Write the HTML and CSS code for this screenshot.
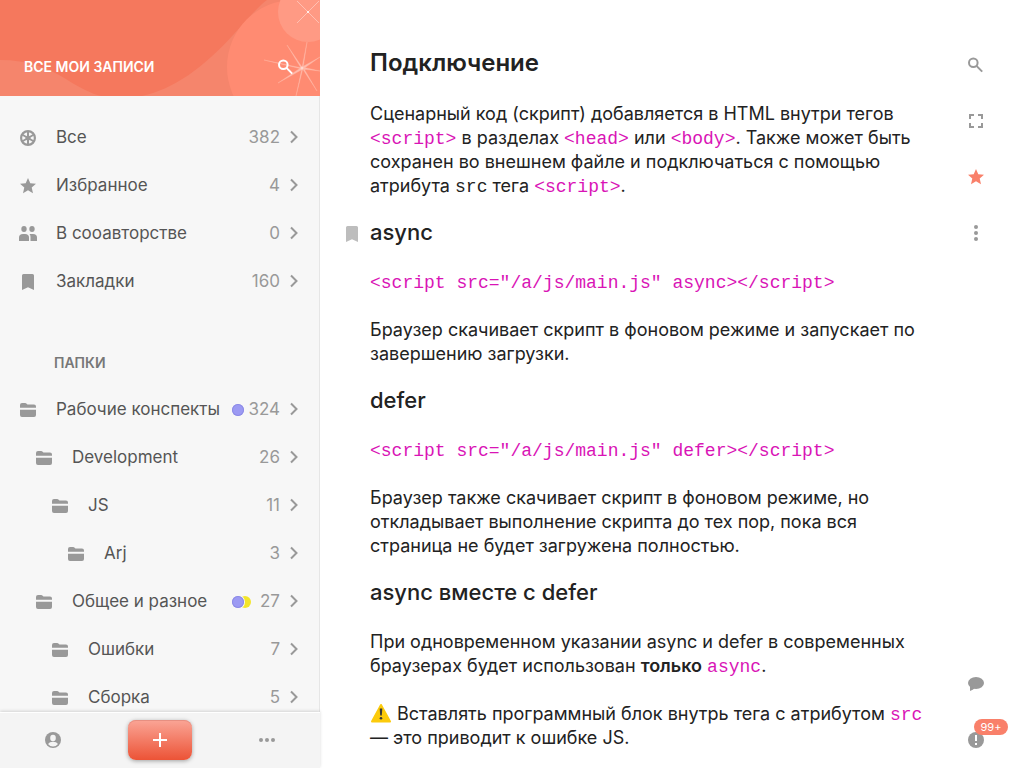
FILE: index.html
```html
<!DOCTYPE html>
<html lang="ru">
<head>
<meta charset="utf-8">
<meta name="viewport" content="width=device-width, initial-scale=1">
<title>Подключение</title>
<link rel="stylesheet" href="styles.css">
</head>
<body>
<svg class="sprite" aria-hidden="true">
  <symbol id="chevron" viewBox="0 0 12 16"><path d="M3 2.500L8.500 8L3 13.500" fill="none" stroke="currentColor" stroke-width="2"/></symbol>
  <symbol id="folder" viewBox="0 0 24 24"><path d="M4 9.800V7Q4 5 6 5h3.200q.7 0 1.200.6l.5.4q.5.500 1.200.500H18q2 0 2 2v1.300zM4 11.800h16V17q0 2-2 2H6q-2 0-2-2z" fill="currentColor"/></symbol>
  <symbol id="star" viewBox="0 0 24 24"><path d="M12 4l2.300 5.300 5.700.5-4.300 3.800 1.300 5.600-5-3-5 3 1.300-5.600L4 9.800l5.700-.5z" fill="currentColor"/></symbol>
  <symbol id="bookmark" viewBox="0 0 24 24"><path d="M6 5.500Q6 4 7.500 4h9Q18 4 18 5.500V20l-6-2.700L6 20z" fill="currentColor"/></symbol>
  <symbol id="search" viewBox="0 0 24 24"><g fill="none" stroke="currentColor" stroke-width="2"><circle cx="9.300" cy="9.700" r="4.300"/><path d="M12.500 12.900l5.700 5.700"/></g></symbol>
</svg>
<div class="app">
  <aside class="sidebar">
    <header class="sidebar-head">
      <svg class="sidebar-art" viewBox="0 0 320 96" preserveAspectRatio="xMaxYMin slice" aria-hidden="true">
        <rect width="320" height="96" fill="#f5785d"/>
        <path d="M0 60C28 60 48 68 66 79C78 87 92 94 101 96H0zM142 96C174 89 203 68 234 34C248 18 260 5 267 0H320V96z" fill="#f5856c"/>
        <circle cx="294" cy="67" r="67" fill="#ff8b72"/>
        <circle cx="308" cy="12" r="30" fill="#ff9a84"/>
        <path d="M297 1l22 22M319 1l-22 22" stroke="#ffcabe" stroke-width="0.800"/>
        <circle cx="308" cy="12" r="1" fill="#fff"/>
        <path d="M307 42L302 68L303 68zM264 60L302 68L302 69zM287 45L302 67L301 68zM278 83L302 67L303 69zM296 96L302 68L303 68zM317 91L302 68L303 67zM320 57L302 67L303 69zM320 71L302 67L302 69z" fill="#ffbcad" stroke="#ffb5a5" stroke-width="0.400"/>
        <circle cx="302" cy="68" r="1.500" fill="#ffd6cd"/>
      </svg>
      <h2 class="sidebar-title">Все мои записи</h2>
      <button class="icon-button on-accent" aria-label="Поиск по записям"><svg class="icon"><use href="#search"/></svg></button>
    </header>
    <nav class="sidebar-nav" aria-label="Записи">
      <ul class="list">
        <li><a class="row" href="#all"><svg class="icon" viewBox="0 0 24 24"><g fill="none" stroke="currentColor"><circle cx="12" cy="12" r="6.900" stroke-width="2.200"/><path d="M12 5v14M6 8.500l12 7M18 8.500l-12 7" stroke-width="2"/></g><circle cx="12" cy="12" r="2.500" fill="currentColor"/></svg><span class="label">Все</span><span class="meta"><span class="count">382</span></span><svg class="chevron"><use href="#chevron"/></svg></a></li>
        <li><a class="row" href="#favorites"><svg class="icon"><use href="#star"/></svg><span class="label">Избранное</span><span class="meta"><span class="count">4</span></span><svg class="chevron"><use href="#chevron"/></svg></a></li>
        <li><a class="row" href="#shared"><svg class="icon" viewBox="0 0 24 24"><g fill="currentColor"><ellipse cx="8" cy="7" rx="2.700" ry="3"/><ellipse cx="16" cy="7" rx="2.700" ry="3"/><path d="M3 19v-3.500Q3 12 7 12h2q4 0 4 3.500V19zM14.500 19v-4q0-1.800-1-3H17q4 0 4 3.500V19z"/></g></svg><span class="label">В сооавторстве</span><span class="meta"><span class="count">0</span></span><svg class="chevron"><use href="#chevron"/></svg></a></li>
        <li><a class="row" href="#bookmarks"><svg class="icon"><use href="#bookmark"/></svg><span class="label">Закладки</span><span class="meta"><span class="count">160</span></span><svg class="chevron"><use href="#chevron"/></svg></a></li>
      </ul>
      <h3 class="section-title">Папки</h3>
      <ul class="list tree">
        <li>
          <a class="row" href="#work"><svg class="icon"><use href="#folder"/></svg><span class="label">Рабочие конспекты</span><span class="meta"><span class="dots"><i class="dot violet"></i></span><span class="count">324</span></span><svg class="chevron"><use href="#chevron"/></svg></a>
          <ul class="list">
            <li>
              <a class="row" href="#dev"><svg class="icon"><use href="#folder"/></svg><span class="label">Development</span><span class="meta"><span class="count">26</span></span><svg class="chevron"><use href="#chevron"/></svg></a>
              <ul class="list">
                <li>
                  <a class="row" href="#js"><svg class="icon"><use href="#folder"/></svg><span class="label">JS</span><span class="meta"><span class="count">11</span></span><svg class="chevron"><use href="#chevron"/></svg></a>
                  <ul class="list">
                    <li><a class="row" href="#arj"><svg class="icon"><use href="#folder"/></svg><span class="label">Arj</span><span class="meta"><span class="count">3</span></span><svg class="chevron"><use href="#chevron"/></svg></a></li>
                  </ul>
                </li>
              </ul>
            </li>
            <li>
              <a class="row" href="#misc"><svg class="icon"><use href="#folder"/></svg><span class="label">Общее и разное</span><span class="meta"><span class="dots"><i class="dot violet"></i><i class="dot yellow"></i></span><span class="count">27</span></span><svg class="chevron"><use href="#chevron"/></svg></a>
              <ul class="list">
                <li><a class="row" href="#errors"><svg class="icon"><use href="#folder"/></svg><span class="label">Ошибки</span><span class="meta"><span class="count">7</span></span><svg class="chevron"><use href="#chevron"/></svg></a></li>
                <li><a class="row" href="#build"><svg class="icon"><use href="#folder"/></svg><span class="label">Сборка</span><span class="meta"><span class="count">5</span></span><svg class="chevron"><use href="#chevron"/></svg></a></li>
              </ul>
            </li>
          </ul>
        </li>
      </ul>
    </nav>
    <footer class="sidebar-foot">
      <button class="icon-button" aria-label="Профиль"><svg class="icon" viewBox="0 0 24 24"><circle cx="12" cy="12" r="8" fill="currentColor"/><ellipse cx="12" cy="10" rx="2.800" ry="3.200" fill="#f4f4f4"/><path d="M7 16q1.500-2.200 5-2.200t5 2.200q-2 2.500-5 2.500t-5-2.500z" fill="#f4f4f4"/></svg></button>
      <button class="add-button" aria-label="Новая запись"><svg class="icon" viewBox="0 0 24 24"><path d="M12 5v14M5 12h14" stroke="currentColor" stroke-width="2"/></svg></button>
      <button class="icon-button" aria-label="Ещё"><svg class="icon" viewBox="0 0 24 24" fill="currentColor"><circle cx="6" cy="12" r="2"/><circle cx="12" cy="12" r="2"/><circle cx="18" cy="12" r="2"/></svg></button>
    </footer>
  </aside>
  <main class="note">
    <article class="note-body">
      <h1>Подключение</h1>
      <p>Сценарный код (скрипт) добавляется в HTML внутри тегов <code class="hl">&lt;script&gt;</code> в разделах <code class="hl">&lt;head&gt;</code> или <code class="hl">&lt;body&gt;</code>. Также может быть сохранен во внешнем файле и подключаться с помощью атрибута <code>src</code> тега <code class="hl">&lt;script&gt;</code>.</p>
      <h2><button class="mark" aria-label="Закладка"><svg class="icon"><use href="#bookmark"/></svg></button>async</h2>
      <p><code class="hl">&lt;script src="/a/js/main.js" async&gt;&lt;/script&gt;</code></p>
      <p>Браузер скачивает скрипт в фоновом режиме и запускает по завершению загрузки.</p>
      <h2>defer</h2>
      <p><code class="hl">&lt;script src="/a/js/main.js" defer&gt;&lt;/script&gt;</code></p>
      <p>Браузер также скачивает скрипт в фоновом режиме, но откладывает выполнение скрипта до тех пор, пока вся страница не будет загружена полностью.</p>
      <h2>async вместе с defer</h2>
      <p>При одновременном указании async и defer в современных браузерах будет использован <strong>только</strong> <code class="hl">async</code>.</p>
      <p><svg class="warning" viewBox="0 0 22 20" role="img" aria-label="Внимание"><path d="M11 2L20 18.500H2z" fill="#fccb0c" stroke="#fccb0c" stroke-width="2" stroke-linejoin="round"/><path d="M9.700 5.500h2.600l-.5 7h-1.600z" fill="#383838"/><circle cx="11" cy="15.200" r="1.300" fill="#383838"/></svg> Вставлять программный блок внутрь тега с атрибутом <code class="hl">src</code> — это приводит к ошибке JS.</p>
    </article>
    <div class="tools">
      <div class="tool-group">
        <button class="icon-button" aria-label="Поиск"><svg class="icon"><use href="#search"/></svg></button>
        <button class="icon-button" aria-label="Во весь экран"><svg class="icon" viewBox="0 0 24 24"><path d="M10 6H6v4M14 6h4v4M10 18H6v-4M14 18h4v-4" fill="none" stroke="currentColor" stroke-width="2"/></svg></button>
        <button class="icon-button accent" aria-label="В избранном"><svg class="icon"><use href="#star"/></svg></button>
        <button class="icon-button" aria-label="Меню записи"><svg class="icon" viewBox="0 0 24 24" fill="currentColor"><circle cx="12" cy="6" r="2"/><circle cx="12" cy="12" r="2"/><circle cx="12" cy="18" r="2"/></svg></button>
      </div>
      <div class="tool-group">
        <button class="icon-button" aria-label="Комментарии"><svg class="icon" viewBox="0 0 24 24" fill="currentColor"><ellipse cx="12" cy="11" rx="8" ry="6"/><path d="M6 14v5q3-1 5-3z"/></svg></button>
        <button class="icon-button" aria-label="Уведомления"><svg class="icon" viewBox="0 0 24 24"><circle cx="12" cy="12" r="8" fill="currentColor"/><path d="M12 7v6M12 15v2" stroke="#fff" stroke-width="2"/></svg><span class="badge">99+</span></button>
      </div>
    </div>
  </main>
</div>
</body>
</html>
```
FILE: styles.css
```css
* { box-sizing: border-box; }

body {
  margin: 0;
  font-family: Inter, "Noto Sans", sans-serif;
  font-size: 18px;
  line-height: 24px;
  color: #222;
  background: #fff;
}

h1, h2, h3, p, ul { margin: 0; padding: 0; }
ul { list-style: none; }
a { color: inherit; text-decoration: none; }

button {
  padding: 0;
  border: 0;
  background: none;
  color: inherit;
  font: inherit;
  cursor: pointer;
}

.sprite { position: absolute; width: 0; height: 0; }

.icon {
  display: block;
  flex: none;
  width: 24px;
  height: 24px;
}

.icon-button {
  position: relative;
  display: grid;
  place-items: center;
  width: 40px;
  height: 40px;
  color: #999;
}

.app {
  display: grid;
  grid-template-columns: 320px minmax(0, 1fr);
  height: 100vh;
}

/* Sidebar */
.sidebar {
  display: flex;
  flex-direction: column;
  min-height: 0;
  background: #f7f7f7;
  box-shadow: inset -1px 0 0 #e6e6e6;
  font-size: 17px;
}

.sidebar-head {
  position: relative;
  display: flex;
  flex: none;
  align-items: flex-end;
  justify-content: space-between;
  height: 96px;
  padding: 0 14px 9px 24px;
  color: #fff;
}

.sidebar-art {
  position: absolute;
  inset: 0;
  width: 100%;
  height: 100%;
}

.sidebar-title {
  position: relative;
  font-size: 14px;
  font-weight: 600;
  line-height: 40px;
  text-transform: uppercase;
}

.icon-button.on-accent { color: #fff; }

.sidebar-nav {
  flex: 1;
  min-height: 0;
  padding-top: 17px;
  overflow: hidden;
}

.row {
  display: flex;
  align-items: center;
  height: 48px;
  padding: 0 20px 0 16px;
  color: #555;
}

.row .icon { margin: 2px 16px 0 0; color: #999; }

.label {
  flex: 1;
  min-width: 0;
  white-space: nowrap;
}

.meta {
  display: flex;
  align-items: center;
  width: 48px;
  color: #999;
}

.count { margin-left: auto; }
.dots { display: flex; margin-top: 2px; }

.dot {
  position: relative;
  width: 12px;
  height: 12px;
  border-radius: 50%;
}

.violet { z-index: 1; background: #9c9af3; box-shadow: inset 0 0 0 1px #8d8be6; }
.yellow { margin-left: -5px; background: #f3e52b; }
.violet:not(:last-child) { box-shadow: inset 0 0 0 1px #8d8be6, 0 0 0 1px #f7f7f7; }

.chevron {
  flex: none;
  width: 12px;
  height: 16px;
  margin-left: 8px;
  color: #999;
}

.section-title {
  padding: 46px 54px 10px;
  font-size: 14px;
  font-weight: 600;
  color: #777;
  text-transform: uppercase;
}

.tree .list > li > .row { padding-left: 32px; }
.tree .list .list > li > .row { padding-left: 48px; }
.tree .list .list .list > li > .row { padding-left: 64px; }

.sidebar-foot {
  position: relative;
  display: flex;
  flex: none;
  align-items: center;
  justify-content: space-between;
  height: 56px;
  padding: 0 33px;
  background: #f4f4f4;
  box-shadow: 0 -1px 3px rgba(0, 0, 0, 0.15), inset 0 1px 0 #fff;
}

.add-button {
  display: grid;
  place-items: center;
  width: 64px;
  height: 40px;
  border-radius: 8px;
  color: #fff;
  background: linear-gradient(#faa596, #ec5336);
  box-shadow: inset 0 1px 0 #e78f81, 0 1px 4px rgba(0, 0, 0, 0.35);
}

/* Note */
.note {
  display: grid;
  grid-template-columns: minmax(0, 1fr) 96px;
  min-height: 0;
}

.note-body {
  display: flex;
  flex-direction: column;
  gap: 24px;
  padding: 48px 0 18px 50px;
}

.note h1 {
  font-size: 24px;
  font-weight: 600;
  line-height: 30px;
}

.note h2 {
  position: relative;
  padding-bottom: 4px;
  font-size: 22px;
  font-weight: 500;
  line-height: 20px;
}

.mark {
  position: absolute;
  left: -30px;
  top: 0;
  color: #bdbdbd;
}

code {
  font-family: "Liberation Mono", monospace;
  font-size: 18px;
  line-height: 20px;
}

.hl { color: #d914b6; }
strong { font-weight: 600; }

.warning {
  width: 22px;
  height: 20px;
  vertical-align: -3px;
}

.tools {
  display: flex;
  flex-direction: column;
  align-items: center;
  justify-content: space-between;
  padding: 45px 0 8px;
}

.tool-group { display: grid; gap: 16px; }
.icon-button.accent { color: #f9806a; }

.badge {
  position: absolute;
  left: 18px;
  top: -1px;
  width: 34px;
  border-radius: 8px;
  font-size: 11px;
  line-height: 16px;
  text-align: center;
  color: #fff;
  background: #f9806a;
}
```
